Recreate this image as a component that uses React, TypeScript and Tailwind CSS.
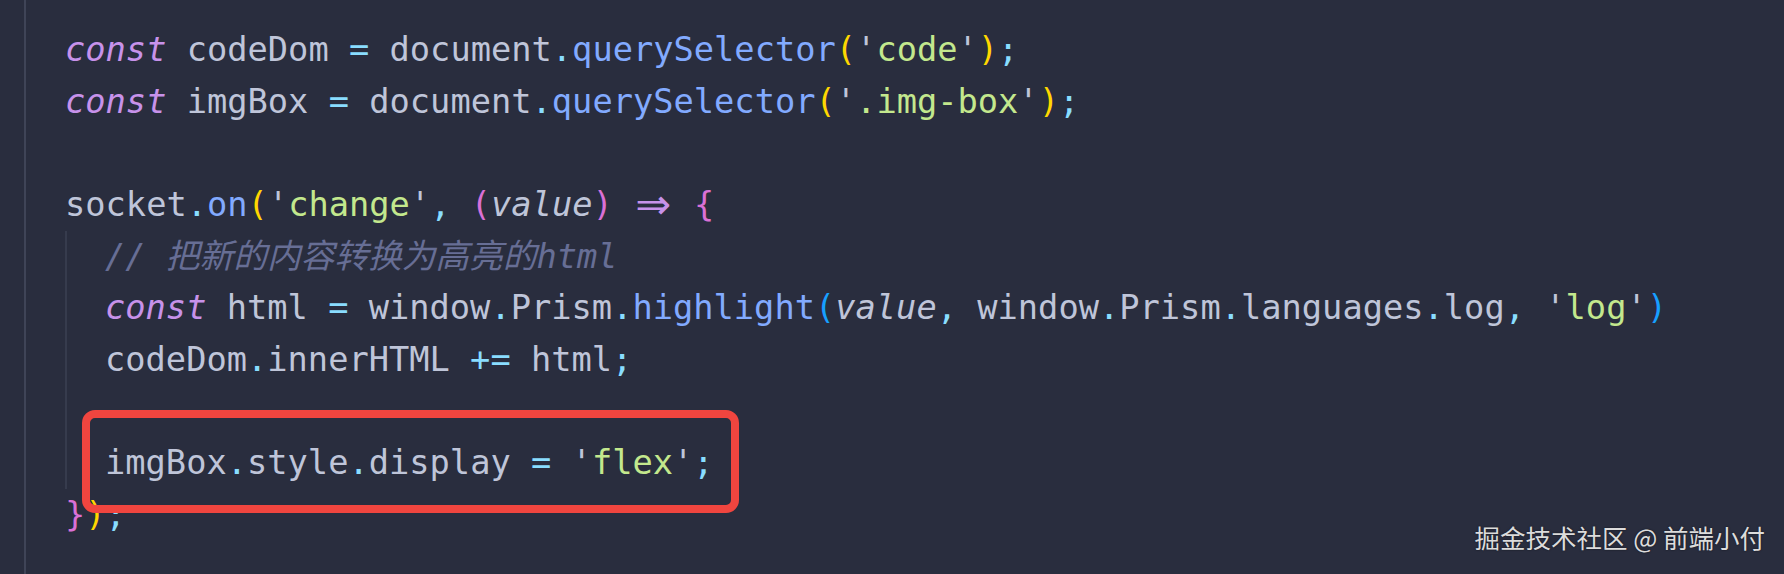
import React from 'react';

type Tok = { t: string; c?: string; i?: boolean };

const GRAY = 'text-[#bfc5d9]';
const CYAN = 'text-[#89ddff]';
const BLUE = 'text-[#82aaff]';
const GREEN = 'text-[#c3e88d]';
const PURPLE = 'text-[#c792ea]';
const GOLD = 'text-[#ffd700]';
const ORCHID = 'text-[#da70d6]';
const BRACKET_BLUE = 'text-[#179fff]';

function Str({ v }: { v: string }) {
  return (
    <>
      <span className={GRAY}>'</span>
      <span className={GREEN}>{v}</span>
      <span className={GRAY}>'</span>
    </>
  );
}

function Line({ children, className = '' }: { children?: React.ReactNode; className?: string }) {
  return <div className={`h-[51.67px] whitespace-pre leading-[51.67px] ${className}`}>{children}</div>;
}

function Toks({ items }: { items: Tok[] }) {
  return (
    <>
      {items.map((k, n) => (
        <span key={n} className={`${k.c ?? GRAY} ${k.i ? 'italic' : ''}`}>
          {k.t}
        </span>
      ))}
    </>
  );
}

export default function App() {
  return (
    <div
      className="relative h-[574px] w-[1784px] overflow-hidden bg-[#292d3e] text-[33.7px]"
      style={{ fontFamily: '"DejaVu Sans Mono", "Noto Sans CJK SC", monospace' }}
    >
      <div className="ml-[24px] h-full border-l-2 border-[#3f4457] pt-[24px] pl-[39px]">
        <Line>
          <Toks
            items={[
              { t: 'const', c: PURPLE, i: true },
              { t: ' codeDom ' },
              { t: '=', c: CYAN },
              { t: ' document' },
              { t: '.', c: CYAN },
              { t: 'querySelector', c: BLUE },
              { t: '(', c: GOLD },
            ]}
          />
          <Str v="code" />
          <Toks items={[{ t: ')', c: GOLD }, { t: ';', c: CYAN }]} />
        </Line>
        <Line>
          <Toks
            items={[
              { t: 'const', c: PURPLE, i: true },
              { t: ' imgBox ' },
              { t: '=', c: CYAN },
              { t: ' document' },
              { t: '.', c: CYAN },
              { t: 'querySelector', c: BLUE },
              { t: '(', c: GOLD },
            ]}
          />
          <Str v=".img-box" />
          <Toks items={[{ t: ')', c: GOLD }, { t: ';', c: CYAN }]} />
        </Line>
        <Line />
        <Line>
          <Toks
            items={[
              { t: 'socket' },
              { t: '.', c: CYAN },
              { t: 'on', c: BLUE },
              { t: '(', c: GOLD },
            ]}
          />
          <Str v="change" />
          <Toks
            items={[
              { t: ',', c: CYAN },
              { t: ' ' },
              { t: '(', c: ORCHID },
              { t: 'value', i: true },
              { t: ')', c: ORCHID },
              { t: ' ' },
            ]}
          />
          <span className={`${PURPLE} inline-block h-[51.67px] w-[40.6px] overflow-visible text-center align-top`}>
            <span className="text-[43px] leading-[51.67px]" style={{ fontFamily: '"DejaVu Sans", sans-serif' }}>
              ⇒
            </span>
          </span>
          <Toks items={[{ t: ' ' }, { t: '{', c: ORCHID }]} />
        </Line>
        <div className="border-l-2 border-[#363b4d] pl-[38px]">
          <Line>
            <span className="text-[#676e95] italic">// 把新的内容转换为高亮的html</span>
          </Line>
          <Line>
            <Toks
              items={[
                { t: 'const', c: PURPLE, i: true },
                { t: ' html ' },
                { t: '=', c: CYAN },
                { t: ' window' },
                { t: '.', c: CYAN },
                { t: 'Prism' },
                { t: '.', c: CYAN },
                { t: 'highlight', c: BLUE },
                { t: '(', c: BRACKET_BLUE },
                { t: 'value', i: true },
                { t: ',', c: CYAN },
                { t: ' window' },
                { t: '.', c: CYAN },
                { t: 'Prism' },
                { t: '.', c: CYAN },
                { t: 'languages' },
                { t: '.', c: CYAN },
                { t: 'log' },
                { t: ',', c: CYAN },
                { t: ' ' },
              ]}
            />
            <Str v="log" />
            <Toks items={[{ t: ')', c: BRACKET_BLUE }]} />
          </Line>
          <Line>
            <Toks
              items={[
                { t: 'codeDom' },
                { t: '.', c: CYAN },
                { t: 'innerHTML ' },
                { t: '+=', c: CYAN },
                { t: ' html' },
                { t: ';', c: CYAN },
              ]}
            />
          </Line>
          <Line />
          <Line className="relative">
            <Toks
              items={[
                { t: 'imgBox' },
                { t: '.', c: CYAN },
                { t: 'style' },
                { t: '.', c: CYAN },
                { t: 'display ' },
                { t: '=', c: CYAN },
                { t: ' ' },
              ]}
            />
            <Str v="flex" />
            <Toks items={[{ t: ';', c: CYAN }]} />
            <span className="pointer-events-none absolute top-[-27px] left-[-23px] z-10 h-[103px] w-[657px] rounded-[13px] border-[8px] border-[#f0453f]" />
          </Line>
        </div>
        <Line>
          <Toks items={[{ t: '}', c: ORCHID }, { t: ')', c: GOLD }, { t: ';', c: CYAN }]} />
        </Line>
      </div>
      <div
        className="absolute right-[19px] bottom-[19px] text-[25.5px] leading-[36px] text-[#dcdcdc] [text-shadow:0_0_2px_rgba(0,0,0,0.6)]"
        style={{ fontFamily: '"Noto Sans CJK SC", sans-serif' }}
      >
        掘金技术社区 @ 前端小付
      </div>
    </div>
  );
}
